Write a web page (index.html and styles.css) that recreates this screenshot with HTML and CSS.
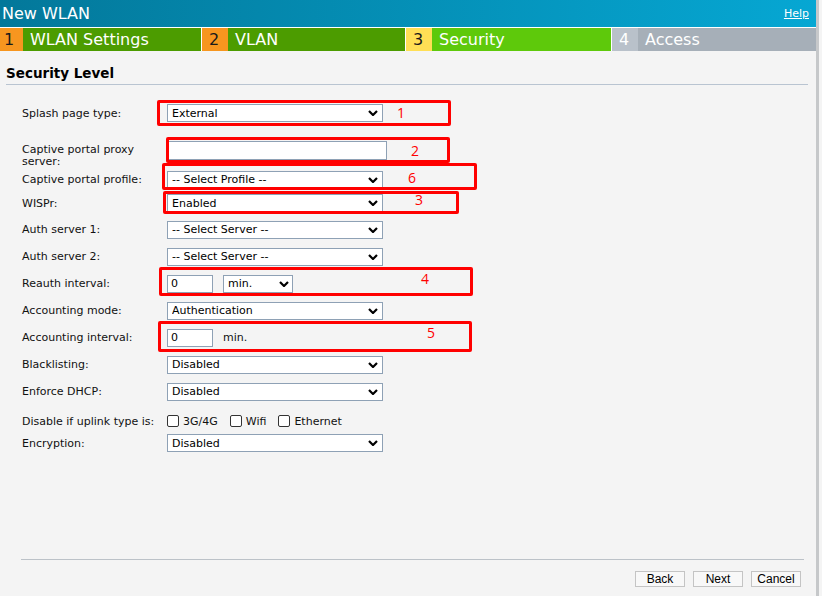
FILE: index.html
```html
<!DOCTYPE html>
<html>
<head>
<meta charset="utf-8">
<title>New WLAN</title>
<link rel="stylesheet" href="styles.css">
</head>
<body>
<div class="page">
  <header class="topbar">
    <span class="title">New WLAN</span>
    <a class="help" href="#">Help</a>
  </header>
  <nav class="steps">
    <div class="step done"><span class="num first">1</span><span class="lbl">WLAN Settings</span></div>
    <div class="step done"><span class="num">2</span><span class="lbl">VLAN</span></div>
    <div class="step current"><span class="num">3</span><span class="lbl">Security</span></div>
    <div class="step todo"><span class="num">4</span><span class="lbl">Access</span></div>
  </nav>
  <h2 class="section">Security Level</h2>

  <form class="form">
    <div class="row r-splash">
      <label class="lab">Splash page type:</label>
      <span class="sel"><select><option>External</option></select><svg viewBox="0 0 10 6"><path d="M1 1 L5 5 L9 1"/></svg></span>
    </div>
    <div class="row r-proxy">
      <label class="lab two">Captive portal proxy<br>server:</label>
      <input class="txt" type="text">
    </div>
    <div class="row r-profile">
      <label class="lab">Captive portal profile:</label>
      <span class="sel"><select><option>-- Select Profile --</option></select><svg viewBox="0 0 10 6"><path d="M1 1 L5 5 L9 1"/></svg></span>
    </div>
    <div class="row r-wispr">
      <label class="lab">WISPr:</label>
      <span class="sel"><select><option>Enabled</option></select><svg viewBox="0 0 10 6"><path d="M1 1 L5 5 L9 1"/></svg></span>
    </div>
    <div class="row">
      <label class="lab">Auth server 1:</label>
      <span class="sel"><select><option>-- Select Server --</option></select><svg viewBox="0 0 10 6"><path d="M1 1 L5 5 L9 1"/></svg></span>
    </div>
    <div class="row">
      <label class="lab">Auth server 2:</label>
      <span class="sel"><select><option>-- Select Server --</option></select><svg viewBox="0 0 10 6"><path d="M1 1 L5 5 L9 1"/></svg></span>
    </div>
    <div class="row">
      <label class="lab">Reauth interval:</label>
      <input class="txt small" type="text" value="0">
      <span class="sel unit"><select><option>min.</option></select><svg viewBox="0 0 10 6"><path d="M1 1 L5 5 L9 1"/></svg></span>
    </div>
    <div class="row">
      <label class="lab">Accounting mode:</label>
      <span class="sel"><select><option>Authentication</option></select><svg viewBox="0 0 10 6"><path d="M1 1 L5 5 L9 1"/></svg></span>
    </div>
    <div class="row">
      <label class="lab">Accounting interval:</label>
      <input class="txt small" type="text" value="0">
      <span class="unit-text">min.</span>
    </div>
    <div class="row">
      <label class="lab">Blacklisting:</label>
      <span class="sel"><select><option>Disabled</option></select><svg viewBox="0 0 10 6"><path d="M1 1 L5 5 L9 1"/></svg></span>
    </div>
    <div class="row">
      <label class="lab">Enforce DHCP:</label>
      <span class="sel"><select><option>Disabled</option></select><svg viewBox="0 0 10 6"><path d="M1 1 L5 5 L9 1"/></svg></span>
    </div>
    <div class="row r-uplink">
      <label class="lab">Disable if uplink type is:</label>
      <label class="chk"><input type="checkbox"><span>3G/4G</span></label>
      <label class="chk"><input type="checkbox"><span>Wifi</span></label>
      <label class="chk"><input type="checkbox"><span>Ethernet</span></label>
    </div>
    <div class="row r-enc">
      <label class="lab">Encryption:</label>
      <span class="sel"><select><option>Disabled</option></select><svg viewBox="0 0 10 6"><path d="M1 1 L5 5 L9 1"/></svg></span>
    </div>
  </form>

  <footer class="foot">
    <button type="button">Back</button>
    <button type="button">Next</button>
    <button type="button">Cancel</button>
  </footer>

  <div class="mark m1"></div>
  <div class="mark m2"></div>
  <div class="mark m6"></div>
  <div class="mark m3"></div>
  <div class="mark m4"></div>
  <div class="mark m5"></div>
  <span class="tag t1">1</span>
  <span class="tag t2">2</span>
  <span class="tag t6">6</span>
  <span class="tag t3">3</span>
  <span class="tag t4">4</span>
  <span class="tag t5">5</span>
</div>
</body>
</html>
```

FILE: styles.css
```css
html, body {
  margin: 0;
  padding: 0;
  background: #f4f4f4;
}
body {
  font-family: "DejaVu Sans", Verdana, sans-serif;
  font-size: 11px;
  color: #111;
}
.page {
  position: relative;
  width: 816px;
  height: 596px;
  border-right: 3px solid #c6c8ca;
  display: flex;
  flex-direction: column;
  background: #f4f4f4;
}
.topbar {
  height: 27px;
  display: flex;
  align-items: center;
  justify-content: space-between;
  background: linear-gradient(to right, #03789a, #06a7d3);
  border-bottom: 1px solid #ffffff;
}
.title {
  color: #fff;
  font-size: 16px;
  padding-left: 2px;
  line-height: 27px;
}
.help {
  color: #fff;
  font-size: 11px;
  text-decoration: underline;
  margin-right: 7px;
  margin-top: -1px;
}
.steps {
  display: grid;
  grid-template-columns: 201px 203px 205px 1fr;
  column-gap: 1px;
  background: #fff;
  height: 23px;
}
.step {
  display: flex;
  font-size: 16px;
  line-height: 23px;
}
.num {
  width: 26px;
  box-sizing: border-box;
  padding-left: 7px;
  color: #1a1a1a;
}
.num.first {
  width: 23px;
  padding-left: 4px;
}
.lbl {
  flex: 1;
  padding-left: 7px;
  color: #fff;
}
.done .num { background: #f7961f; }
.done .lbl { background: #4c9c00; }
.current .num { background: #ffdf55; }
.current .lbl { background: #5ec90b; }
.todo .num { background: #b9c1ca; color: #fff; }
.todo .lbl { background: #a6afb8; }

.section {
  margin: 14px 8px 0 6px;
  padding: 0 0 3px 0;
  font-size: 13.5px;
  line-height: 16px;
  font-weight: bold;
  color: #000;
  border-bottom: 1px solid #b9c4d1;
}

.form {
  margin: 15px 0 0 22px;
}
.row {
  display: flex;
  align-items: center;
  height: 27px;
}
.r-splash { height: 26px; }
.r-proxy {
  margin-top: 15px;
  height: 28px;
  align-items: flex-start;
}
.r-profile { height: 21px; }
.r-wispr { height: 26px; }
.r-uplink { margin-top: 3px; height: 26px; }
.r-enc { height: 18px; }

.lab {
  width: 145px;
  flex: none;
  white-space: nowrap;
  color: #111;
}
.lab.two {
  padding-top: 3px;
  line-height: 12px;
}
.sel {
  position: relative;
  display: inline-block;
  width: 216px;
  height: 18px;
}
.sel select {
  appearance: none;
  -webkit-appearance: none;
  box-sizing: border-box;
  width: 100%;
  height: 100%;
  margin: 0;
  padding: 0 0 0 4px;
  border: 1px solid #8ea1b5;
  border-radius: 0;
  background: #fff;
  color: #000;
  font-family: "DejaVu Sans", Verdana, sans-serif;
  font-size: 11px;
  outline: none;
}
.sel svg {
  position: absolute;
  right: 5px;
  top: 50%;
  margin-top: -3px;
  width: 10px;
  height: 6px;
  fill: none;
  stroke: #000;
  stroke-width: 2.2;
  pointer-events: none;
}
.sel.unit {
  width: 70px;
  margin-left: 10px;
}
.sel.unit svg { right: 4px; }
.txt {
  box-sizing: border-box;
  width: 220px;
  height: 19px;
  margin: 0;
  padding: 0 3px;
  border: 1px solid #8ea1b5;
  border-radius: 0;
  background: #fff;
  color: #000;
  font-family: "DejaVu Sans", Verdana, sans-serif;
  font-size: 11px;
}
.txt.small {
  width: 46px;
  height: 18px;
}
.unit-text {
  margin-left: 10px;
}
.chk {
  display: flex;
  align-items: center;
  margin-right: 12px;
}
.chk:first-of-type { margin-left: -1px; }
.chk input {
  appearance: none;
  -webkit-appearance: none;
  width: 12px;
  height: 12px;
  margin: 0 4px 0 0;
  border: 1px solid #333;
  border-radius: 2px;
  background: #fff;
}

.foot {
  margin: auto 12px 0 21px;
  border-top: 1px solid #bcc2c8;
  padding: 11px 3px 9px 0;
  display: flex;
  justify-content: flex-end;
  gap: 8px;
}
.foot button {
  width: 50px;
  height: 16px;
  margin: 0;
  padding: 0;
  border: 1px solid #c4c4c4;
  border-radius: 0;
  background: #f8f8f8;
  color: #000;
  font-family: "Liberation Sans", Arial, sans-serif;
  font-size: 12px;
  line-height: 14px;
}

.mark {
  position: absolute;
  box-sizing: border-box;
  border: 3px solid #ff0000;
  border-radius: 2px;
}
.m1 { left: 157px; top: 100px; width: 294px; height: 26px; }
.m2 { left: 166px; top: 137px; width: 284px; height: 26px; }
.m6 { left: 162px; top: 163px; width: 315px; height: 27px; }
.m3 { left: 163px; top: 191px; width: 296px; height: 23px; }
.m4 { left: 159px; top: 267px; width: 314px; height: 29px; }
.m5 { left: 158px; top: 321px; width: 314px; height: 31px; }
.tag {
  position: absolute;
  color: #ff0000;
  font-family: "Open Sans", "Liberation Sans", sans-serif;
  font-size: 14px;
  line-height: 14px;
}
.t1 { left: 397px; top: 106px; }
.t2 { left: 411px; top: 144px; }
.t6 { left: 408px; top: 171px; }
.t3 { left: 415px; top: 193px; }
.t4 { left: 421px; top: 272px; }
.t5 { left: 427px; top: 326px; }
```
